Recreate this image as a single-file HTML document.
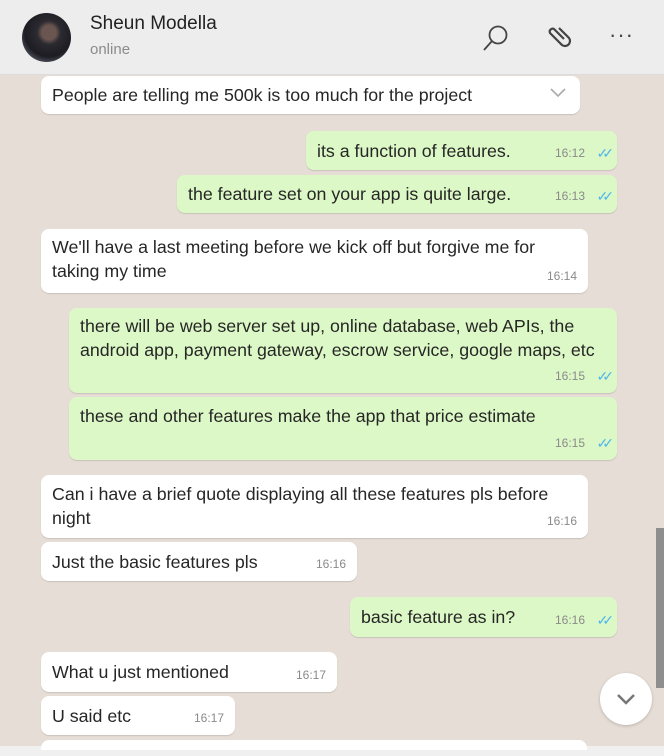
<!DOCTYPE html><html><head><style>
body{margin:0;width:664px;height:756px;overflow:hidden;background:#e6ded6;font-family:"Liberation Sans",sans-serif;position:relative}
.h{position:absolute;left:0;top:0;width:664px;height:74px;background:#ededed;border-bottom:1px solid #dcdcdc}
.b{position:absolute;border-radius:8px;font-size:17.8px;color:#262626;box-shadow:0 1px 1px rgba(0,0,0,.13);box-sizing:border-box;padding:8px 11px;line-height:24px;white-space:nowrap}
.w{background:#fff}.g{background:#dcf8c6}
.t{position:absolute;right:11px;bottom:5px;font-size:12px;color:#8a8a8a}
.g .t{right:32px}
.ck{position:absolute;right:9px;bottom:5px;color:#4fb6ec;font-size:14px;letter-spacing:-6px}
</style></head><body>
<div class="h">
<div style="position:absolute;left:22px;top:13px;width:49px;height:49px;border-radius:50%;background:radial-gradient(circle at 55% 40%,#6a5550 0 18%,#2a2a30 30%,#1c1c22 60%,#8a92a0 100%)"></div>
<div style="position:absolute;left:90px;top:13px;font-size:19px;color:#222">Sheun Modella</div>
<div style="position:absolute;left:90px;top:41px;font-size:15px;color:#8b8b8b">online</div>
<svg style="position:absolute;left:482px;top:23px" width="28" height="30"><circle cx="16" cy="12" r="8.5" fill="none" stroke="#444" stroke-width="1.8"/><path d="M10 18 2 27" stroke="#444" stroke-width="1.8"/></svg>
<svg style="position:absolute;left:542px;top:20px" width="34" height="34"><path d="M8 15 18 5a5 5 0 0 1 7 7L13 24a3 3 0 0 1-4-4l10-10" fill="none" stroke="#444" stroke-width="2.2" transform="rotate(90 17 17) translate(0 2)"/></svg>
<div style="position:absolute;left:609px;top:22px;font-size:22px;color:#444;letter-spacing:1px">···</div>
</div>
<div class="b w" style="left:41px;top:76px;width:539px;height:38px;padding-top:7px">People are telling me 500k is too much for the project<svg style="position:absolute;right:14px;top:10px" width="16" height="12"><path d="M1 3 8 10 15 3" fill="none" stroke="#aaa" stroke-width="1.6"/></svg></div>
<div class="b g" style="left:306px;top:131px;width:311px;height:39px">its a function of features.<span class="t">16:12</span><span class="ck">✓✓</span></div>
<div class="b g" style="left:177px;top:175px;width:440px;height:38px;padding-top:7px">the feature set on your app is quite large.<span class="t">16:13</span><span class="ck">✓✓</span></div>
<div class="b w" style="left:41px;top:229px;width:547px;height:64px;padding-top:6px">We'll have a last meeting before we kick off but forgive me for<br>taking my time<span class="t">16:14</span></div>
<div class="b g" style="left:69px;top:308px;width:548px;height:85px;padding-top:6px">there will be web server set up, online database, web APIs, the<br>android app, payment gateway, escrow service, google maps, etc<span class="t">16:15</span><span class="ck">✓✓</span></div>
<div class="b g" style="left:69px;top:397px;width:548px;height:63px;padding-top:7px">these and other features make the app that price estimate<span class="t">16:15</span><span class="ck">✓✓</span></div>
<div class="b w" style="left:41px;top:475px;width:547px;height:63px;padding-top:7px">Can i have a brief quote displaying all these features pls before<br>night<span class="t">16:16</span></div>
<div class="b w" style="left:41px;top:542px;width:316px;height:39px">Just the basic features pls<span class="t">16:16</span></div>
<div class="b g" style="left:350px;top:597px;width:267px;height:40px">basic feature as in?<span class="t">16:16</span><span class="ck">✓✓</span></div>
<div class="b w" style="left:41px;top:652px;width:296px;height:40px">What u just mentioned<span class="t">16:17</span></div>
<div class="b w" style="left:41px;top:696px;width:194px;height:39px">U said etc<span class="t">16:17</span></div>
<div style="position:absolute;left:656px;top:528px;width:8px;height:160px;background:#8e8e8e"></div>
<div style="position:absolute;left:600px;top:673px;width:52px;height:52px;border-radius:50%;background:#fff;box-shadow:0 1px 3px rgba(0,0,0,.2)"><svg width="52" height="52"><path d="M18 22 26 30 34 22" fill="none" stroke="#777" stroke-width="2.5"/></svg></div>
<div style="position:absolute;left:0;top:746px;width:664px;height:10px;background:#f0f0f0"></div>
<div style="position:absolute;left:41px;top:740px;width:546px;height:10px;background:#fff;border-radius:8px 8px 0 0"></div>
</body></html>
